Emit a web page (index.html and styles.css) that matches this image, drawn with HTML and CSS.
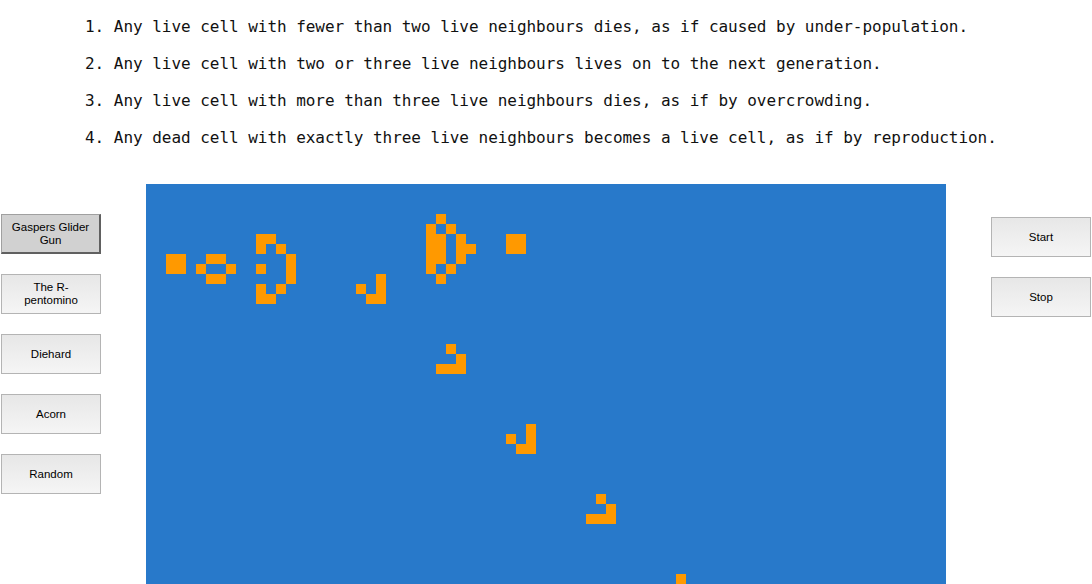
FILE: index.html
```html
<!DOCTYPE html>
<html lang="en">
<head>
<meta charset="utf-8">
<title>Game of Life</title>
<link rel="stylesheet" href="styles.css">
</head>
<body>
<ol class="rules">
  <li>Any live cell with fewer than two live neighbours dies, as if caused by under-population.</li>
  <li>Any live cell with two or three live neighbours lives on to the next generation.</li>
  <li>Any live cell with more than three live neighbours dies, as if by overcrowding.</li>
  <li>Any dead cell with exactly three live neighbours becomes a live cell, as if by reproduction.</li>
</ol>
<div class="board">
  <div class="controls controls-left">
    <button class="btn btn-active">Gaspers Glider Gun</button>
    <button class="btn">The R-pentomino</button>
    <button class="btn">Diehard</button>
    <button class="btn">Acorn</button>
    <button class="btn">Random</button>
  </div>
  <svg class="world" width="800" height="600" viewBox="0 0 800 600" shape-rendering="crispEdges">
    <rect class="world-bg" x="0" y="0" width="800" height="600"/>
    <g class="cells">
      <!-- block -->
      <rect x="20" y="70" width="20" height="20"/>
      <!-- beehive -->
      <rect x="60" y="70" width="20" height="10"/>
      <rect x="50" y="80" width="10" height="10"/>
      <rect x="80" y="80" width="10" height="10"/>
      <rect x="60" y="90" width="20" height="10"/>
      <!-- gun left part -->
      <rect x="110" y="50" width="20" height="10"/>
      <rect x="110" y="60" width="10" height="10"/>
      <rect x="130" y="60" width="10" height="10"/>
      <rect x="140" y="70" width="10" height="30"/>
      <rect x="110" y="80" width="10" height="10"/>
      <rect x="110" y="100" width="10" height="20"/>
      <rect x="130" y="100" width="10" height="10"/>
      <rect x="120" y="110" width="10" height="10"/>
      <!-- small J -->
      <rect x="230" y="90" width="10" height="30"/>
      <rect x="210" y="100" width="10" height="10"/>
      <rect x="220" y="110" width="10" height="10"/>
      <!-- gun right part -->
      <rect x="290" y="30" width="10" height="10"/>
      <rect x="280" y="40" width="10" height="50"/>
      <rect x="300" y="40" width="10" height="10"/>
      <rect x="290" y="50" width="10" height="30"/>
      <rect x="310" y="50" width="10" height="30"/>
      <rect x="320" y="60" width="10" height="10"/>
      <rect x="300" y="80" width="10" height="10"/>
      <rect x="290" y="90" width="10" height="10"/>
      <!-- block -->
      <rect x="360" y="50" width="20" height="20"/>
      <!-- glider 1 -->
      <rect x="300" y="160" width="10" height="10"/>
      <rect x="310" y="170" width="10" height="10"/>
      <rect x="290" y="180" width="30" height="10"/>
      <!-- glider 2 -->
      <rect x="380" y="240" width="10" height="30"/>
      <rect x="360" y="250" width="10" height="10"/>
      <rect x="370" y="260" width="10" height="10"/>
      <!-- glider 3 -->
      <rect x="450" y="310" width="10" height="10"/>
      <rect x="460" y="320" width="10" height="10"/>
      <rect x="440" y="330" width="30" height="10"/>
      <!-- glider 4 -->
      <rect x="530" y="390" width="10" height="30"/>
      <rect x="510" y="400" width="10" height="10"/>
      <rect x="520" y="410" width="10" height="10"/>
    </g>
  </svg>
  <div class="controls controls-right">
    <button class="btn">Start</button>
    <button class="btn">Stop</button>
  </div>
</div>
</body>
</html>
```

FILE: styles.css
```css
html, body {
  margin: 0;
  padding: 0;
  background: #ffffff;
}

body {
  font-family: "Liberation Sans", Arial, sans-serif;
}

.rules {
  list-style: none;
  counter-reset: rule;
  margin: 17px 0 0 0;
  padding: 0 0 0 85px;
  font-family: "DejaVu Sans Mono", "Liberation Mono", monospace;
  font-size: 16px;
  line-height: 19px;
  letter-spacing: -0.035px;
  color: #111111;
}

.rules li {
  counter-increment: rule;
}

.rules li + li {
  margin-top: 18px;
}

.rules li::before {
  content: counter(rule) ". ";
}

.board {
  display: flex;
  justify-content: space-between;
  align-items: flex-start;
  margin: 37px 1px 0 1px;
}

.controls {
  display: flex;
  flex-direction: column;
  gap: 20px;
  width: 100px;
}

.controls-left {
  padding-top: 30px;
}

.controls-right {
  padding-top: 33px;
}

.btn {
  box-sizing: border-box;
  width: 100px;
  height: 40px;
  margin: 0;
  padding: 0 8px;
  border: 1px solid #b4b4b4;
  border-radius: 0;
  background: linear-gradient(#e7e7e7, #f5f5f5);
  font-family: "Liberation Sans", Arial, sans-serif;
  font-size: 11.5px;
  line-height: 13px;
  color: #000000;
  text-align: center;
}

.btn-active {
  background: #d1d1d1;
  border-top: 1px solid #a0a0a0;
  border-left: 1px solid #a0a0a0;
  border-right: 2px solid #606060;
  border-bottom: 2px solid #606060;
}

.world {
  display: block;
  flex: none;
}

.world-bg {
  fill: #2879ca;
}

.cells rect {
  fill: #ff9900;
}
```
